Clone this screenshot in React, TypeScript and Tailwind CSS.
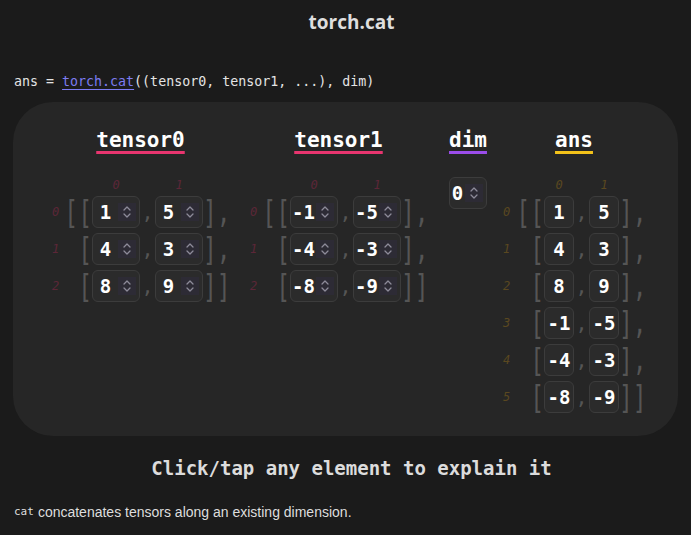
import React from 'react';

const MONO = "font-['DejaVu_Sans_Mono',monospace]";

type Kind = 'tensor' | 'ans';

const Spinner: React.FC = () => (
  <span className="w-[18px] h-[18px] bg-[#2d2b35] flex items-center justify-center shrink-0">
    <svg width="10" height="14" viewBox="0 0 10 14" fill="none" stroke="#8d8b99" strokeWidth="1.3" strokeLinecap="round" strokeLinejoin="round">
      <path d="M2 5 L5 2 L8 5" />
      <path d="M2 9 L5 12 L8 9" />
    </svg>
  </span>
);

const Cell: React.FC<{ v: number; spin?: boolean; w: string }> = ({ v, spin, w }) => (
  <div className={`${w} h-[32px] rounded-[6px] border border-[#3c3c3c] bg-[#2b2b2b] flex items-center`}>
    <span className={`flex-1 text-center text-white text-[19px] font-semibold ${MONO}`}>{v}</span>
    {spin && <span className="mr-[3px]"><Spinner /></span>}
  </div>
);

const Bracket: React.FC<{ t: string; align: 'left' | 'right'; w: string }> = ({ t, align, w }) => (
  <span className={`${w} h-[32px] flex items-center ${align === 'right' ? 'justify-end' : 'justify-start'} text-[#555555] text-[23px] ${MONO} whitespace-pre scale-y-[1.35]`}>
    {t}
  </span>
);

const Matrix: React.FC<{ rows: number[][]; kind: Kind }> = ({ rows, kind }) => {
  const spin = kind === 'tensor';
  const cw = spin ? 'w-[48px]' : 'w-[30px]';
  const idx = kind === 'tensor' ? 'text-[#5c2638]' : 'text-[#5a4820]';
  const open = kind === 'tensor' ? 'w-[26px]' : 'w-[27px]';
  return (
    <div className="flex flex-col">
      <div className={`flex items-center h-[16px] mb-[3px] italic text-[12px] ${idx} ${MONO}`}>
        <span className="w-[14px]" />
        <span className={open} />
        <span className={`${cw} text-center`}>0</span>
        <span className="w-[15px]" />
        <span className={`${cw} text-center`}>1</span>
      </div>
      <div className="flex flex-col gap-[5px]">
        {rows.map((r, i) => (
          <div key={i} className="flex items-center h-[32px]">
            <span className={`w-[14px] italic text-[12px] ${idx} ${MONO}`}>{i}</span>
            <Bracket t={i === 0 ? '[[' : '['} align="right" w={open} />
            <Cell v={r[0]} spin={spin} w={cw} />
            <span className={`w-[15px] self-end pb-[1px] text-center text-[#555555] text-[20px] ${MONO}`}>,</span>
            <Cell v={r[1]} spin={spin} w={cw} />
            <Bracket t={i === rows.length - 1 ? ']]' : '],'} align="left" w="w-[26px]" />
          </div>
        ))}
      </div>
    </div>
  );
};

const Header: React.FC<{ label: string; color: string }> = ({ label, color }) => (
  <div className={`h-[28px] flex items-center justify-center text-[21px] font-bold text-white ${MONO}`}>
    <span className={`underline decoration-[3px] underline-offset-[4px] ${color}`}>{label}</span>
  </div>
);

export default function App() {
  const t0 = [[1, 5], [4, 3], [8, 9]];
  const t1 = [[-1, -5], [-4, -3], [-8, -9]];
  const ans = [...t0, ...t1];

  return (
    <div className="min-h-screen bg-[#1b1b1b] text-[#e4e4e4]">
      <div className="h-[44px] pl-[12px] flex items-center justify-center text-[19px] font-bold font-['Open_Sans',sans-serif] text-[#dedede]">
        torch.cat
      </div>

      <div className={`mt-[28px] px-[14px] h-[20px] flex items-center text-[13.3px] ${MONO} whitespace-pre`}>
        ans = <span className="text-[#7d7cf2] underline underline-offset-[3px]">torch.cat</span>((tensor0, tensor1, ...), dim)
      </div>

      <div className="mt-[10px] mx-[13px] rounded-[40px] bg-[#262626] pt-[25px] pb-[23px] pl-[39px] flex items-start">
        <div className="flex flex-col">
          <Header label="tensor0" color="decoration-[#e8356f]" />
          <div className="mt-[22px]"><Matrix rows={t0} kind="tensor" /></div>
        </div>
        <div className="flex flex-col ml-[21px]">
          <Header label="tensor1" color="decoration-[#e8356f]" />
          <div className="mt-[22px]"><Matrix rows={t1} kind="tensor" /></div>
        </div>
        <div className="flex flex-col ml-[22px] w-[38px]">
          <Header label="dim" color="decoration-[#9b4dea]" />
          <div className="mt-[22px]"><Cell v={0} spin w="w-[38px]" /></div>
        </div>
        <div className="flex flex-col ml-[16px]">
          <Header label="ans" color="decoration-[#f3c21a]" />
          <div className="mt-[22px]"><Matrix rows={ans} kind="ans" /></div>
        </div>
      </div>

      <div className={`mt-[18px] h-[28px] pl-[12px] flex items-center justify-center text-[19px] font-bold text-[#dcdcdc] ${MONO}`}>
        Click/tap any element to explain it
      </div>

      <div className="mt-[21px] px-[14px] h-[18px] flex items-center text-[14px] text-[#dedede] font-['Liberation_Sans',sans-serif]">
        <span className={`text-[11px] ${MONO} mr-[4px]`}>cat</span>
        concatenates tensors along an existing dimension.
      </div>
    </div>
  );
}
